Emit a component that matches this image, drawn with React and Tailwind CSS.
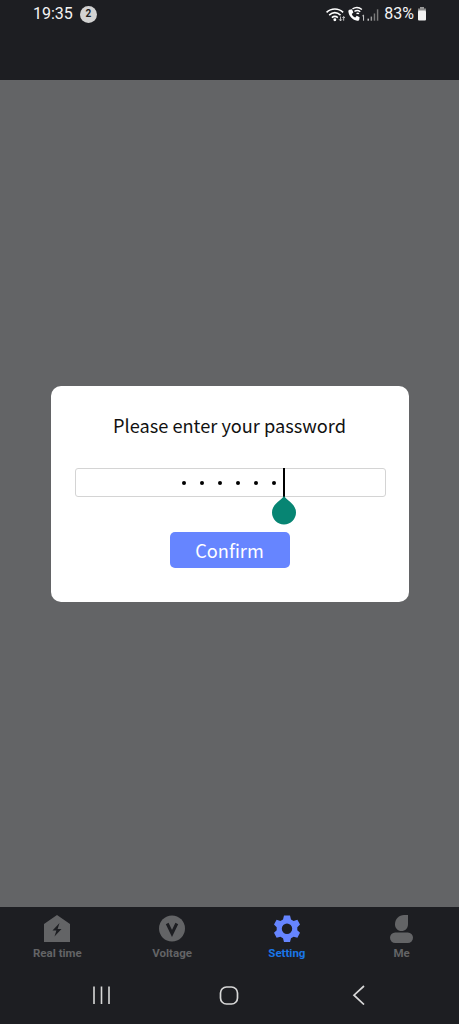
import React from "react";

const DOTS = [0, 1, 2, 3, 4, 5];

const StatusIcons = () => (
  <svg width="56" height="19" viewBox="0 0 54 18" fill="none" className="block">
    {/* wifi */}
    <path d="M1.5 7 C6 2.6 13 2.6 17.5 7" stroke="#fff" strokeWidth="1.5" />
    <path d="M4 9.6 C7.4 6.6 11.6 6.6 15 9.6" stroke="#fff" strokeWidth="1.5" />
    <path d="M6.6 12 C8.5 10.4 10.5 10.4 12.4 12" stroke="#fff" strokeWidth="1.5" />
    <circle cx="9.5" cy="14" r="1.4" fill="#fff" />
    <path d="M15 11v4M13.6 13.6l1.4 1.6 1.4-1.6M18 15v-4M16.8 12.4l1.2-1.4 1.2 1.4" stroke="#ddd" strokeWidth="0.8" />
    {/* call over wifi */}
    <path d="M23.5 4.5 L26 4 L27.4 7 L25.8 8.4 C26.4 10 27.6 11.2 29.2 11.8 L30.6 10.2 L33.4 11.6 L33 14 C32.8 15 31.8 15.2 31 15 C26.6 14.2 23.4 11 22.6 6.6 C22.4 5.6 22.8 4.8 23.5 4.5 Z" fill="#fff" />
    <path d="M26.5 3.6 C29.4 1.8 33 2 35.6 4.2" stroke="#fff" strokeWidth="1.3" />
    <path d="M28.4 6 C30.2 4.9 32.4 5 34 6.4" stroke="#fff" strokeWidth="1.3" />
    <path d="M30.4 8.2 C31.2 7.7 32 7.7 32.8 8.3" stroke="#fff" strokeWidth="1.3" />
    <path d="M36 10.4 L37.2 9.6 V15" stroke="#ddd" strokeWidth="0.9" />
    {/* signal */}
    <rect x="41" y="13" width="1.4" height="2" fill="#c8c8c8" />
    <rect x="44" y="11" width="1.4" height="4" fill="#9a9a9a" />
    <rect x="47" y="8" width="1.4" height="7" fill="#7a7a7a" />
    <rect x="50" y="4" width="1.4" height="11" fill="#7a7a7a" />
  </svg>
);

const BatteryIcon = () => (
  <svg width="10" height="14" viewBox="0 0 9 14" className="block">
    <rect x="2.5" y="0" width="4" height="2" fill="#9a9a9a" />
    <rect x="0.5" y="1.5" width="8" height="2.5" fill="#8a8a8a" />
    <rect x="0.5" y="3.5" width="8" height="10" rx="1" fill="#f2f2f2" />
  </svg>
);

const StatusBar = () => (
  <div className="flex h-[80px] shrink-0 items-start justify-between bg-[#1d1e22] pl-[33px] pr-[32px] pt-[5px]">
    <div className="flex h-[18px] items-center gap-[7px]">
      <span className="text-[16px] leading-none font-normal text-[#f4f4f4]">19:35</span>
      <span className="flex h-[17px] w-[17px] items-center justify-center rounded-full bg-[#d2d2d2] text-[10px] leading-none font-bold text-[#1d1e22]">
        2
      </span>
    </div>
    <div className="flex h-[18px] items-center">
      <StatusIcons />
      <span className="ml-[3px] text-[16px] leading-none font-normal text-[#f4f4f4]">83%</span>
      <span className="ml-[3px]">
        <BatteryIcon />
      </span>
    </div>
  </div>
);

const PasswordDialog = () => (
  <div className="flex h-[216px] w-[358px] flex-col items-center rounded-[10px] bg-white pt-[25px]">
    <h2 className="text-[18.2px] leading-[28px] font-normal text-[#111]">Please enter your password</h2>
    <div className="ml-[1px] mt-[29px] flex h-[29px] w-[311px] shrink-0 items-center justify-center rounded-[3px] border border-[#d4d4d4] pl-[7px]">
      <div className="flex items-center gap-[14.2px]">
        {DOTS.map((d) => (
          <span key={d} className="h-[4px] w-[4px] rounded-full bg-black" />
        ))}
      </div>
      <div className="relative ml-[7px] h-[29px] w-[2px] bg-black">
        {/* text selection handle */}
        <svg width="24" height="29" viewBox="0 0 24 29" className="absolute left-[-11px] top-[28px] block">
          <path d="M12 0 C15 4.5 24 8 24 16.5 C24 23 18.6 28.5 12 28.5 C5.4 28.5 0 23 0 16.5 C0 8 9 4.5 12 0 Z" fill="#078573" />
        </svg>
      </div>
    </div>
    <button
      type="button"
      className="mt-[35px] flex h-[36px] w-[120px] shrink-0 items-center justify-center rounded-[5px] bg-[#6685ff] text-[18.2px] leading-none text-white"
    >
      Confirm
    </button>
  </div>
);

const tabs = [
  {
    label: "Real time",
    color: "text-[#636466]",
    icon: (
      <svg width="26" height="28" viewBox="0 0 26 28" className="block">
        <path fillRule="evenodd" fill="#636466" d="M13 0 L26 9 V27 H0 V9 Z M15.5 8 L8.5 15.5 H12.4 L10.5 21.5 L17.5 14 H13.6 L15.5 8 Z" />
      </svg>
    ),
  },
  {
    label: "Voltage",
    color: "text-[#636466]",
    icon: (
      <svg width="26" height="28" viewBox="0 0 26 28" className="block">
        <circle cx="13" cy="13.5" r="13" fill="#636466" />
        <path d="M8.2 8.5 L13 18.5 L17.8 8.5" fill="none" stroke="#1d1e22" strokeWidth="3" />
      </svg>
    ),
  },
  {
    label: "Setting",
    color: "text-[#1a76e8]",
    icon: (
      <svg width="26" height="28" viewBox="0 0 26 28" className="block">
        <path
          fillRule="evenodd"
          fill="#6685ff"
          d="M10 0.6 H16 L17 4.4 L19.6 5.9 L23.4 4.8 L26 9.6 L23.3 12.2 V15.2 L26 17.8 L23.4 22.8 L19.6 21.7 L17 23.2 L16 27 H10 L9 23.2 L6.4 21.7 L2.6 22.8 L0 17.8 L2.7 15.2 V12.2 L0 9.6 L2.6 4.8 L6.4 5.9 L9 4.4 Z M13 8.6 A5.2 5.2 0 1 0 13 19 A5.2 5.2 0 1 0 13 8.6 Z"
        />
      </svg>
    ),
  },
  {
    label: "Me",
    color: "text-[#636466]",
    icon: (
      <svg width="26" height="28" viewBox="0 0 26 28" className="block">
        <path fill="#636466" d="M19 0 V9 C19 13.4 16 16 12.5 16 C8.6 16 6 13 6 9.2 C6 4 10 0 15 0 Z" />
        <rect x="1" y="17.5" width="23" height="10.5" rx="5.2" fill="#636466" />
      </svg>
    ),
  },
];

const TabBar = () => (
  <div className="grid h-[61px] grid-cols-4 pt-[8px]">
    {tabs.map((t) => (
      <div key={t.label} className="flex flex-col items-center">
        {t.icon}
        <span className={`mt-[3px] text-[11.5px] leading-[14px] font-bold ${t.color}`}>{t.label}</span>
      </div>
    ))}
  </div>
);

const NavBar = () => (
  <div className="flex h-[56px] items-start pl-[92px] pt-[17px]">
    <svg width="20" height="20" viewBox="0 0 20 20" className="block" stroke="#d8d8d8" strokeWidth="1.6">
      <path d="M2 1.5V19M9.5 1.5V19M17 1.5V19" />
    </svg>
    <svg width="20" height="20" viewBox="0 0 20 20" fill="none" className="ml-[107px] block" stroke="#d8d8d8" strokeWidth="1.7">
      <rect x="1.5" y="2" width="17" height="17" rx="6" />
    </svg>
    <svg width="14" height="20" viewBox="0 0 14 20" fill="none" className="ml-[113px] block" stroke="#d8d8d8" strokeWidth="1.7">
      <path d="M12 1 L2 10.2 L12 19.5" />
    </svg>
  </div>
);

export default function App() {
  return (
    <div className="flex h-[1024px] w-[459px] flex-col overflow-hidden bg-[#1d1e22] font-['Roboto',sans-serif]">
      <StatusBar />
      <div className="flex h-[827px] shrink-0 flex-col items-center bg-[#636466] pt-[306px] font-['Noto_Sans_CJK_SC','Noto_Sans',sans-serif]">
        <PasswordDialog />
      </div>
      <TabBar />
      <NavBar />
    </div>
  );
}
